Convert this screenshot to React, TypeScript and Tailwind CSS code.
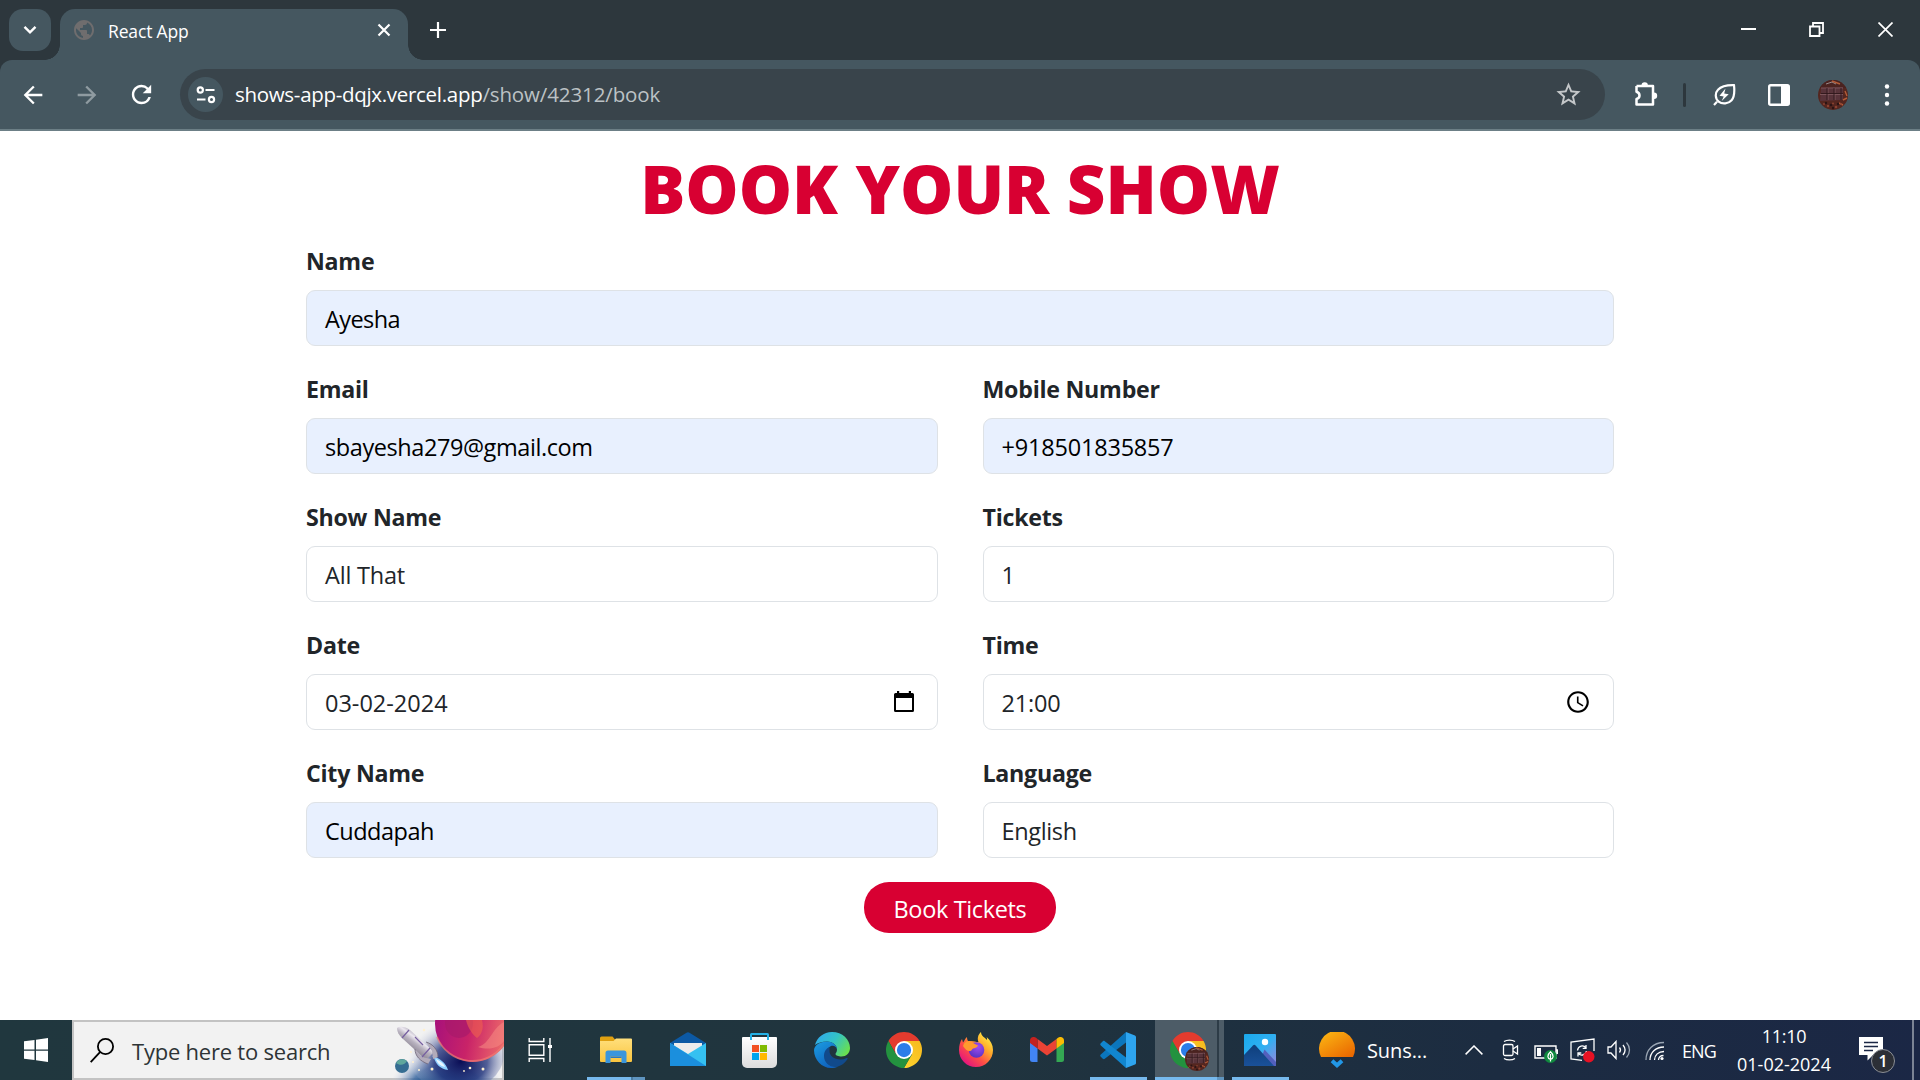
import type { ReactNode } from "react";
import { MdArrowBack, MdArrowForward, MdRefresh, MdStarBorder, MdPublic, MdAccessTime } from "react-icons/md";

/* ---------- browser chrome ---------- */

function Avatar({ className = "" }: { className?: string }) {
  return (
    <svg viewBox="0 0 30 30" className={className}>
      <defs>
        <clipPath id="avatarClip"><circle cx="15" cy="15" r="15" /></clipPath>
      </defs>
      <g clipPath="url(#avatarClip)">
        <rect width="30" height="30" fill="#54261f" />
        <path d="M0 0h30v8H0z" fill="#4a2320" />
        <path d="M3 8 25 7v13L2 21z" fill="#58333a" />
        <path d="M3 8h22M2 14.500h23M10 8v12M17 8v12" stroke="#80585e" strokeWidth="0.900" fill="none" />
        <path d="M3 13.500h22M9 8v12M16 8v12M23 8v12" stroke="#30171b" strokeWidth="0.900" fill="none" />
        <path d="M8 4l6-2 4 2" stroke="#9a8a8a" strokeWidth="1" fill="none" />
        <path d="M14 1l8 3M27 11l2 5M25 20l4-2M21 23l4 2" stroke="#b45c38" strokeWidth="1.400" fill="none" />
        <g fill="#8c4231">
          <circle cx="6" cy="24" r="1" /><circle cx="10" cy="26" r="1.200" /><circle cx="15" cy="23.500" r="1" /><circle cx="18" cy="27" r="1.300" /><circle cx="23" cy="24" r="1" />
        </g>
        <g fill="#2b1415">
          <circle cx="8" cy="23" r="1.200" /><circle cx="13" cy="25" r="1.300" /><circle cx="20" cy="24" r="1.200" /><circle cx="15" cy="28" r="1.200" />
        </g>
      </g>
    </svg>
  );
}

function TabStrip() {
  return (
    <div className="flex h-[60px] justify-between bg-[#2d373d]">
      <div className="flex">
        <div className="ml-[9px] mt-[9px] flex size-[42px] items-center justify-center rounded-[14px] bg-[#455760]">
          <svg viewBox="0 0 14 10" className="mt-[-1px] h-[10px] w-[14px]"><path d="M1.5 1.8 7 7.3l5.500-5.500" fill="none" stroke="#fff" strokeWidth="2.4" /></svg>
        </div>
        <div className="-ml-[6px] size-[15px] self-end bg-[radial-gradient(circle_at_0_0,transparent_14.5px,#455760_15px)]" />
        <div className="mt-[9px] flex h-[51px] w-[348px] items-start rounded-t-[15px] bg-[#455760] pl-3 pr-[17px] pt-[9px]">
          <MdPublic className="size-6 text-[#6f6d6e]" />
          <span className="ml-3 mt-px text-[17.5px] leading-6 tracking-[-0.15px] text-white">React App</span>
          <svg viewBox="0 0 14 14" className="ml-auto mt-[5px] size-[14px]"><path d="M1.500 1.500l11 11m0-11-11 11" stroke="#fff" strokeWidth="2.200" /></svg>
        </div>
        <div className="size-[15px] self-end bg-[radial-gradient(circle_at_100%_0,transparent_14.5px,#455760_15px)]" />
        <svg viewBox="0 0 16 16" className="ml-[7px] mt-[22px] size-4"><path d="M8 0v16M0 8h16" stroke="#fff" strokeWidth="2.200" /></svg>
      </div>
      <div className="flex pr-[27px] pt-[22px]">
        <svg viewBox="0 0 15 15" className="size-[15px]"><path d="M0 7h15" stroke="#fff" strokeWidth="2" /></svg>
        <svg viewBox="0 0 15 15" className="ml-[53px] size-[15px]" fill="none" stroke="#fff" strokeWidth="1.800"><path d="M1 4.500h9.500V14H1zM4 4V1h10v10h-3" /></svg>
        <svg viewBox="0 0 15 15" className="ml-[54px] size-[15px]"><path d="M0.500 0.500l14 14m0-14-14 14" stroke="#fff" strokeWidth="1.700" /></svg>
      </div>
    </div>
  );
}

function Toolbar() {
  return (
    <div className="bg-[#2d373d]">
      <div className="flex h-[71px] items-center rounded-t-[12px] border-b-2 border-[#6c7f86] bg-[#455760]">
        <MdArrowBack className="ml-[19px] size-[28px] text-white" />
        <MdArrowForward className="ml-[26px] size-[28px] text-[#8f9ba1]" />
        <MdRefresh className="ml-[26px] size-[29px] text-white" />
        <div className="ml-[24px] flex h-[51px] w-[1425px] items-center rounded-full bg-[#39444b] pl-2">
          <div className="flex size-[35px] items-center justify-center rounded-full bg-[#455760]">
            <svg viewBox="0 0 20 18" className="h-[18px] w-5" fill="none" stroke="#fff" strokeWidth="2.200">
              <circle cx="4.300" cy="4" r="2.600" /><path d="M9.500 4h9M1 13.500h8.500" /><circle cx="15.500" cy="13.500" r="2.600" />
            </svg>
          </div>
          <div className="-mt-[2px] ml-[12px] flex whitespace-nowrap text-[20.5px] leading-8 text-white">
            <span className="tracking-[-0.3px]">shows-app-dqjx.vercel.app</span>
            <span className="tracking-[-0.12px] text-[#bcc2c5]">/show/42312/book</span>
          </div>
          <MdStarBorder className="ml-auto mr-[22px] size-[29px] text-[#c4c7c9]" />
        </div>
        <svg viewBox="0 0 26 26" className="ml-[28px] size-[26px]">
          <path d="M3.500 4H20v7.500M20 16v6.500H3.500V17c1.900-.5 3-1.800 3-3.600s-1.100-3.200-3-3.700V4M20 11v5.500" fill="none" stroke="#fff" strokeWidth="2.500" strokeLinejoin="round" />
          <path d="M8.500 3.500a3.200 3.200 0 0 1 6.400 0zM21 10.500a3.200 3.200 0 0 1 0 6.400z" fill="#fff" />
        </svg>
        <div className="ml-[24px] h-6 w-[3px] rounded-sm bg-[#2d373d]" />
        <svg viewBox="0 0 24 24" className="ml-[26px] size-6">
          <path d="M2 22l3-3.200M22 2.200c.8 7.300 0 12.200-2.400 15-3.200 3.600-9.300 4.300-12.900 1.400C3 15.700 2.900 10 6 6.800 9 3.500 14.400 2 22 2.200z" fill="none" stroke="#fff" strokeWidth="2.200" />
          <path d="M13.500 5.500 7.500 12.800l4.200.6-2 4.500 7-6.700-4.500-.7z" fill="#fff" />
        </svg>
        <svg viewBox="0 0 22 22" className="ml-[32px] size-[22px]">
          <rect x="1.200" y="1.200" width="19.600" height="19.600" rx="1.500" fill="none" stroke="#fff" strokeWidth="2.400" /><path d="M13 1h8v20h-8z" fill="#fff" />
        </svg>
        <Avatar className="ml-[28px] size-[30px]" />
        <svg viewBox="0 0 6 22" className="ml-[36px] h-[22px] w-[6px]" fill="#fff"><circle cx="3" cy="2.500" r="2.200" /><circle cx="3" cy="11" r="2.200" /><circle cx="3" cy="19.500" r="2.200" /></svg>
      </div>
    </div>
  );
}

/* ---------- booking form ---------- */

type FieldProps = { label: string; value: string; filled?: boolean; icon?: ReactNode; wide?: boolean; tracking?: string };

function Field({ label, value, filled, icon, wide, tracking = "" }: FieldProps) {
  return (
    <label className={wide ? "col-span-2 flex flex-col" : "flex flex-col"}>
      <span className="h-9 whitespace-nowrap text-[23.2px] font-bold leading-9 tracking-[-0.25px] text-[#212529]">{label}</span>
      <span className={"mt-[11px] flex h-14 items-center justify-between rounded-[9px] border border-[#dee2e6] pl-[18px] pr-[22px] " + (filled ? "bg-[#e8f0fe] text-black" : "bg-white text-[#212529]")}>
        <span className={"mt-[2px] whitespace-nowrap text-[23.5px] leading-9 " + tracking}>{value}</span>
        {icon}
      </span>
    </label>
  );
}

function CalendarIcon() {
  return (
    <svg viewBox="0 0 20 22" className="mr-px h-[22px] w-5 text-black">
      <path d="M3 0h2.200v2h9.600V0H17v2h1.500A1.500 1.500 0 0 1 20 3.500v16a1.500 1.500 0 0 1-1.500 1.500h-17A1.500 1.500 0 0 1 0 19.500v-16A1.500 1.500 0 0 1 1.500 2H3zM2 7v12h16V7z" fill="currentColor" />
    </svg>
  );
}

function BookingPage() {
  return (
    <main className="h-[889px] bg-white pl-[306px] pr-[306px]">
      <h1 className="h-28 whitespace-nowrap pt-px text-center text-[67px] font-extrabold leading-[113px] text-[#d80032]">BOOK YOUR SHOW</h1>
      <form className="flex flex-col items-center">
        <div className="grid w-full grid-cols-2 gap-x-[45px] gap-y-[25px]">
          <Field wide label="Name" value="Ayesha" filled tracking="tracking-[-0.6px]" />
          <Field label="Email" value="sbayesha279@gmail.com" filled tracking="tracking-[-0.42px]" />
          <Field label="Mobile Number" value="+918501835857" filled tracking="tracking-[-0.2px]" />
          <Field label="Show Name" value="All That" tracking="tracking-[-0.2px]" />
          <Field label="Tickets" value="1" />
          <Field label="Date" value="03-02-2024" icon={<CalendarIcon />} />
          <Field label="Time" value="21:00" tracking="tracking-[-0.2px]" icon={<MdAccessTime className="size-[26px] text-black" />} />
          <Field label="City Name" value="Cuddapah" filled tracking="tracking-[-0.5px]" />
          <Field label="Language" value="English" tracking="tracking-[-0.35px]" />
        </div>
        <button type="button" className="mt-6 h-[51px] w-48 whitespace-nowrap rounded-[25px] bg-[#d80032] pt-[3px] text-[23.5px] leading-[48px] tracking-[-0.35px] text-white">Book Tickets</button>
      </form>
    </main>
  );
}

/* ---------- taskbar ---------- */

function ChromeLogo({ id }: { id: string }) {
  return (
    <svg viewBox="0 0 48 48" className="size-9">
      <defs>
        <linearGradient id={id + "y"} x1="1" y1="0" x2="0.300" y2="1"><stop offset="0" stopColor="#f7b91d" /><stop offset="1" stopColor="#fcd12c" /></linearGradient>
      </defs>
      <path d="M24 12h20.780A24 24 0 0 0 3.220 12L13.600 30z" fill="#e33b2e" />
      <path d="M34.390 30 24 48A24 24 0 0 0 44.780 12H24z" fill={"url(#" + id + "y)"} />
      <path d="M13.610 30 3.220 12A24 24 0 0 0 24 48l10.390-18z" fill="#23923f" />
      <circle cx="24" cy="24" r="12" fill="#fff" />
      <circle cx="24" cy="24" r="9.500" fill="#2b7de9" />
    </svg>
  );
}

function Slot({ children, bar, className = "" }: { children: ReactNode; bar?: ReactNode; className?: string }) {
  return (
    <div className={"flex h-[60px] shrink-0 flex-col items-center justify-between " + className}>
      <div className="flex h-[57px] items-center justify-center pt-[3px]">{children}</div>
      {bar}
    </div>
  );
}

function SpaceArt() {
  return (
    <svg viewBox="0 0 116 60" className="h-[60px] w-[116px] shrink-0">
      <defs>
        <radialGradient id="space" cx="0.520" cy="0.800" r="0.520">
          <stop offset="0" stopColor="#0b1a6e" /><stop offset="0.400" stopColor="#134a86" /><stop offset="0.650" stopColor="#3d6aa2" stopOpacity="0.850" /><stop offset="1" stopColor="#c9cfe4" stopOpacity="0" />
        </radialGradient>
        <radialGradient id="space2" cx="0.550" cy="0.600" r="0.550">
          <stop offset="0" stopColor="#0a0d55" /><stop offset="0.500" stopColor="#2a3a80" stopOpacity="0.800" /><stop offset="1" stopColor="#c9cfe4" stopOpacity="0" />
        </radialGradient>
        <linearGradient id="planet" x1="0" y1="0.300" x2="1" y2="0.500">
          <stop offset="0" stopColor="#a5107c" /><stop offset="0.500" stopColor="#c92368" /><stop offset="1" stopColor="#f0706a" />
        </linearGradient>
        <linearGradient id="rocket" x1="0.300" y1="0.750" x2="0.700" y2="0.250">
          <stop offset="0" stopColor="#77707f" /><stop offset="0.500" stopColor="#b9b3c0" /><stop offset="0.700" stopColor="#ece8f0" /><stop offset="1" stopColor="#9d97a8" />
        </linearGradient>
        <clipPath id="artClip"><path d="M0 0h116v60H0z" /></clipPath>
      </defs>
      <g clipPath="url(#artClip)">
        <ellipse cx="56" cy="48" rx="56" ry="44" fill="url(#space)" />
        <ellipse cx="68" cy="34" rx="48" ry="38" fill="url(#space2)" />
        <circle cx="85" cy="4" r="38" fill="url(#planet)" />
        <ellipse cx="71" cy="3" rx="14" ry="15" fill="#a8196b" opacity="0.700" />
        <path d="M78 0h16c2 8 0 14-5 18C84 14 80 8 78 0z" fill="#f0624f" opacity="0.600" />
        <path d="M116 2c-12 6-14 22-26 25 12 4 22 0 26-6z" fill="#f58a84" opacity="0.550" />
        <path d="M49 17a38 38 0 0 0 67 7" fill="none" stroke="#f07b72" strokeWidth="1.800" opacity="0.700" />
        <circle cx="14" cy="46" r="7" fill="#356d92" />
        <path d="M8 43a7 7 0 0 1 11-2c-2 4-7 5-11 2z" fill="#5fa79c" />
        <path d="M44 36c8 2 14 7 16 14-8-1-12-6-14-12z" fill="#8fd0ff" />
        <path d="M48 39c5 2 8 5 9 8-5-1-8-4-9-8z" fill="#e8f6ff" />
        <path d="M9 8c2-2 8-2 13 2l24 22-8 8L14 18c-3-3-5-6-5-10z" fill="url(#rocket)" />
        <path d="M27 29c0 7 5 12 13 15l3-5-9-2zM38 22c7 2 12 8 12 15l-5 2-1-8z" fill="#b2abba" />
        <path d="M27 29c0 7 5 12 13 15M38 22c7 2 12 8 12 15" fill="none" stroke="#6e6678" strokeWidth="0.800" />
        <path d="M21 10l-7 8M42 28l-8 9M27 17l8 8" stroke="#765fa0" strokeWidth="1.200" fill="none" />
        <g fill="#fff0cf">
          <circle cx="36" cy="10" r="1.300" /><circle cx="44" cy="49" r="1.500" /><circle cx="31" cy="50" r="1" /><circle cx="25" cy="42" r="1" /><circle cx="23" cy="32" r="0.900" /><circle cx="82" cy="48" r="1.300" /><circle cx="95" cy="49" r="1.500" /><circle cx="76" cy="51" r="0.900" />
        </g>
      </g>
    </svg>
  );
}

function Taskbar() {
  return (
    <footer className="flex h-[60px] items-center bg-[linear-gradient(90deg,#20373e_0%,#20343e_50%,#1c2c41_78%,#1b2745_100%)]">
      <Slot className="w-[72px]">
        <svg viewBox="0 0 24 24" className="ml-[-1px] size-6" fill="#fff"><path d="M0 3.300 10.500 2v9.500H0zM12 1.800 24 0v11.500H12zM0 12.800h10.500V22L0 20.700zM12 12.800h12V24l-12-1.800z" /></svg>
      </Slot>
      <div className="flex h-[60px] w-[432px] items-center border-2 border-[#c3c3c3] bg-[#f2f2f2] pl-4">
        <svg viewBox="0 0 24 25" className="h-[25px] w-6 shrink-0" fill="none" stroke="#000" strokeWidth="1.800"><circle cx="15.500" cy="8.500" r="7.600" /><path d="M10 14.200.7 24.200" /></svg>
        <span className="ml-[18px] mt-[2px] whitespace-nowrap text-[22px] leading-8 tracking-[-0.22px] text-[#2e3436]">Type here to search</span>
        <div className="-mr-[2px] -mt-px ml-auto"><SpaceArt /></div>
      </div>
      <Slot className="w-[76px]">
        <svg viewBox="0 0 25 24" className="ml-[-3px] h-6 w-[25px]" fill="none" stroke="#fff" strokeWidth="1.400"><path d="M1.200 0v3.500h14.600V0M1.200 6.800h14.600v10.500H1.200zM1.200 24v-3.500h14.600V24M22 0v24" /><path d="M20 7h4v3h-4z" fill="#fff" stroke="none" /></svg>
      </Slot>
      <Slot className="w-[72px]" bar={<div className="flex h-[3px] w-[58px]"><div className="w-11 bg-[#76b9ed]" /><div className="w-[2px] bg-[#4a7ca3]" /><div className="w-3 bg-[#5f95c0]" /></div>}>
        <svg viewBox="0 0 32 28" className="h-7 w-8">
          <defs><linearGradient id="folder" x1="0" y1="0" x2="0" y2="1"><stop offset="0" stopColor="#ffdf7c" /><stop offset="1" stopColor="#fac53f" /></linearGradient></defs>
          <path d="M1.500.5h11l3 3.500H31a1 1 0 0 1 1 1V10H0V2A1.500 1.500 0 0 1 1.500.5z" fill="#dfa011" />
          <path d="M0 5h13.500L16 2.500h15a1 1 0 0 1 1 1V25a1 1 0 0 1-1 1H1a1 1 0 0 1-1-1z" fill="url(#folder)" />
          <path d="M5.500 27V17a2.500 2.500 0 0 1 2.500-2.500h16a2.500 2.500 0 0 1 2.500 2.500v10h-5v-6.500h-11V27z" fill="#3a96dd" />
          <path d="M10.500 20.500h11v1.500h-11z" fill="#2b78c0" />
        </svg>
      </Slot>
      <Slot className="w-[72px]">
        <svg viewBox="0 0 36 34" className="-mt-[2px] h-[34px] w-9">
          <path d="M0 11 16.500.8a3 3 0 0 1 3 0L36 11v5H0z" fill="#0c59a4" />
          <path d="M4 11h28v12H4z" fill="#ececec" />
          <path d="M0 11 18 22 36 11v23H0z" fill="#35c1f1" />
          <path d="M0 11l36 23H0z" fill="#1b8fdd" />
        </svg>
      </Slot>
      <Slot className="w-[72px]">
        <svg viewBox="0 0 35 36" className="-ml-px h-9 w-[35px]">
          <defs><linearGradient id="bag" x1="0" y1="0" x2="0" y2="1"><stop offset="0" stopColor="#fff" /><stop offset="1" stopColor="#dcdcdc" /></linearGradient></defs>
          <path d="M0 6a1 1 0 0 1 1-1h33a1 1 0 0 1 1 1v25a5 5 0 0 1-5 5H5a5 5 0 0 1-5-5z" fill="url(#bag)" />
          <path d="M9 8V2.500A.5.5 0 0 1 9.500 2h16a.5.5 0 0 1 .5.5V8" fill="none" stroke="#25b1e6" strokeWidth="2" />
          <path d="M10 13h7v7h-7z" fill="#f25022" /><path d="M18 13h7v7h-7z" fill="#7fba00" /><path d="M10 21h7v7h-7z" fill="#00a4ef" /><path d="M18 21h7v7h-7z" fill="#ffb900" />
        </svg>
      </Slot>
      <Slot className="w-[72px]">
        <svg viewBox="0 0 36 36" className="size-9">
          <defs>
            <linearGradient id="edgeTop" x1="0" y1="0.200" x2="1" y2="0.700"><stop offset="0" stopColor="#2fa9ee" /><stop offset="0.500" stopColor="#33c3c5" /><stop offset="1" stopColor="#6be04c" /></linearGradient>
            <linearGradient id="edgeMid" x1="0" y1="0" x2="0.600" y2="1"><stop offset="0" stopColor="#1b9de2" /><stop offset="1" stopColor="#0f62bd" /></linearGradient>
          </defs>
          <path d="M1 13C3 5.500 9.500 0 18 0c10.500 0 18 7.500 18 16 0 5-4 8.500-8.500 8.500-3 0-6-1-6-2.500 0-1 1.500-1.700 1.500-4.500 0-4-4-8-10-8C8 9.500 4 11 1 13z" fill="url(#edgeTop)" />
          <path d="M13 9.500C5.500 9.500.5 13.500 0 18c0 10 8 18 17 18 2.500 0 5-.5 7-1.500-8 .5-13.500-6-12-14 .7-3.500 3-5.500 5-6.500 2.500-1 5.500.5 6 3.500 0-4-4-8-10-8z" fill="url(#edgeMid)" />
          <path d="M15.500 15c-3.500 1.500-5.500 5-5.500 9 0 6 4.500 11 12 11 5.500-1 9.500-4.500 11.500-8 .4-.8-.3-1.300-1-1-2 1-4 1.500-6 1.500-6.500 0-11-4-11-8.500 0-1.500 0-3 0-4z" fill="#114a8b" />
        </svg>
      </Slot>
      <Slot className="w-[72px]"><ChromeLogo id="chromeA" /></Slot>
      <Slot className="w-[72px]">
        <svg viewBox="0 0 36 36" className="size-9">
          <defs>
            <linearGradient id="fox" x1="0.900" y1="0.100" x2="0.200" y2="0.900"><stop offset="0" stopColor="#fff044" /><stop offset="0.350" stopColor="#ffa62b" /><stop offset="0.650" stopColor="#ff4f45" /><stop offset="1" stopColor="#e5177c" /></linearGradient>
            <radialGradient id="foxGlobe" cx="0.600" cy="0.300" r="0.700"><stop offset="0" stopColor="#a24cf0" /><stop offset="1" stopColor="#5a33c4" /></radialGradient>
          </defs>
          <path d="M23 0c0 4 3.500 5 6 8 .2-1 0-2-.4-3 4 3.500 6.400 8 6.400 13 0 9.500-7.500 17-17 17S1 27.500 1 18c0-4.500 1-8 3-11l1 3.500C6.500 9 7 6.500 9 5c0 2 .5 3.500 1.500 4.500 3-1.500 7 .5 10 .5C19 6.500 20 2.500 23 0z" fill="url(#fox)" />
          <circle cx="18.500" cy="18" r="7.800" fill="url(#foxGlobe)" />
          <path d="M5 14c1-4 4-5.500 7-5 3 1.500 5 3.500 8 4.500-1 2.500-3.500 2.500-5 3-1.500 1-1 2.500-3.500 2.500S7 17 5 14z" fill="#ff9a2e" />
        </svg>
      </Slot>
      <Slot className="w-[70px]">
        <svg viewBox="0 0 34 26" className="-mt-px h-[26px] w-[34px]">
          <path d="M0 5l7.500 6v14H2.500A2.500 2.500 0 0 1 0 22.500z" fill="#4285f4" />
          <path d="M34 5l-7.500 6v14h5a2.500 2.500 0 0 0 2.500-2.500z" fill="#34a853" />
          <path d="M7.500 2 17 9l9.500-7v9.500L17 18.500l-9.500-7z" fill="#ea4335" />
          <path d="M0 3.500C0 .3 3.700-1 6 .8L7.500 2v9.500L0 6z" fill="#c5221f" />
          <path d="M34 3.500C34 .3 30.300-1 28 .8L26.500 2v9.500L34 6z" fill="#fbbc04" />
        </svg>
      </Slot>
      <Slot className="w-[73px]" bar={<div className="h-[3px] w-[57px] bg-[#76b9ed]" />}>
        <svg viewBox="0 0 36 36" className="-ml-px mr-px size-9">
          <path d="M26 0 0.800 22.600a1.500 1.500 0 0 0 0 2.200l2 1.900c.6.500 1.300.6 2 .1L26 10.500z" fill="#0b76bd" />
          <path d="M26 36 .8 13.400a1.500 1.500 0 0 1 0-2.200l2-1.900c.6-.5 1.300-.6 2-.1L26 25.500z" fill="#1186cf" />
          <path d="M26 0l9 3.500c.6.300 1 .9 1 1.600v25.800c0 .7-.4 1.300-1 1.600L26 36z" fill="#2ea5ef" />
        </svg>
      </Slot>
      <div className="flex h-[60px] w-[69px]">
        <Slot className="w-[62px] bg-[#4d5c67]" bar={<div className="h-[3px] w-full bg-[#76b9ed]" />}>
          <div className="relative ml-[3px] size-9">
            <ChromeLogo id="chromeB" />
            <Avatar className="absolute left-[15px] top-[15px] size-6" />
          </div>
        </Slot>
        <div className="h-full w-[2px] border-b-[3px] border-[#5f95c0] bg-[#2d3c47]" />
        <div className="h-full w-[5px] border-b-[3px] border-[#5f95c0] bg-[#4d5c67]" />
      </div>
      <Slot className="w-[73px]" bar={<div className="h-[3px] w-[57px] bg-[#76b9ed]" />}>
        <svg viewBox="0 0 32 32" className="-ml-px mr-px size-8">
          <defs>
            <linearGradient id="sky" x1="0" y1="0" x2="1" y2="1"><stop offset="0" stopColor="#1aa9ec" /><stop offset="0.500" stopColor="#2fb0f2" /><stop offset="1" stopColor="#9a86dd" /></linearGradient>
            <linearGradient id="hill" x1="0" y1="0" x2="0" y2="1"><stop offset="0" stopColor="#0e3f7c" /><stop offset="1" stopColor="#1a5199" /></linearGradient>
          </defs>
          <rect width="32" height="32" rx="1" fill="url(#sky)" />
          <circle cx="21" cy="8" r="3.200" fill="#fff" />
          <path d="M14 32 20.500 15.500 32 28v4z" fill="#5360bd" />
          <path d="M0 21 9 11.500a1.800 1.800 0 0 1 2.600 0L30 32H0z" fill="url(#hill)" />
        </svg>
      </Slot>
      <svg viewBox="0 0 36 36" className="ml-[22px] size-9 shrink-0">
        <defs><linearGradient id="sun" x1="0.100" y1="0" x2="0.900" y2="1"><stop offset="0" stopColor="#fcb814" /><stop offset="1" stopColor="#e96600" /></linearGradient></defs>
        <path d="M2 25A18 18 0 1 1 34 25z" fill="url(#sun)" />
        <path d="M13 28.800 18 33.300l5-4.500" fill="none" stroke="#2297e6" strokeWidth="4" />
      </svg>
      <span className="ml-[12px] mt-[2px] w-[62px] whitespace-nowrap text-[20px] leading-7 tracking-[-0.1px] text-white">Suns...</span>

      <svg viewBox="0 0 18 10" className="ml-[36px] h-[10px] w-[18px] shrink-0"><path d="M.6 9.400 9 1l8.400 8.400" fill="none" stroke="#fff" strokeWidth="1.500" /></svg>
      <svg viewBox="0 0 18 22" className="ml-[19px] h-[22px] w-[18px] shrink-0" fill="none" stroke="#fff" strokeWidth="1.300"><rect x="1.500" y="5.500" width="9.500" height="11" rx="1.500" /><path d="M11 10l4.500-3v8L11 12M2 2.500C5 .6 10 .6 13 2.500M2 19.500c3 1.900 8 1.900 11 0" /></svg>
      <svg viewBox="0 0 24 18" className="ml-[14px] mt-[7px] h-[18px] w-6 shrink-0"><path d="M1 1h21v12H1zM22 5h1.500v4" fill="none" stroke="#fff" strokeWidth="1.400" /><path d="M3 3h4v8H3z" fill="#fff" /><circle cx="16.500" cy="11.500" r="6.500" fill="#10893e" /><path d="M16.500 6.800c4 3.500 3 7 0 7.500-3-.5-4-4 0-7.500zM16.500 9v7.500" fill="none" stroke="#fff" strokeWidth="1.200" /></svg>
      <svg viewBox="0 0 25 25" className="ml-[12px] mt-px h-[25px] w-[25px] shrink-0" fill="none" stroke="#fff" strokeWidth="1.300"><path d="M24 13V1L1 4v17l11 1.300" /><path d="M7.500 12.500c.5-5 6-6 8.500-2.500M16 7v3.300h-3.300M16.500 13c-.7 4.500-6.500 5.500-8.500 2M8 18.500V15h3.300" /><circle cx="18.800" cy="18.800" r="5.700" fill="#e81123" stroke="none" /></svg>
      <svg viewBox="0 0 24 20" className="ml-[12px] h-5 w-6 shrink-0" fill="none" stroke="#fff" strokeWidth="1.300"><path d="M1 7h3l5-5.500v17L4 13H1z" /><path d="M12.500 7.500c1.200 1.500 1.200 3.500 0 5M16 5c2.500 3 2.500 7 0 10" /><path d="M19.500 2.500c4 4.500 4 10.500 0 15" stroke="#9aa5b3" /></svg>
      <svg viewBox="0 0 20 20" className="ml-[14px] mt-[2px] size-5 shrink-0" fill="none" stroke="#fff" strokeWidth="1.300"><path d="M1 19C1 9 8 1.500 19 1.500" stroke="#9aa5b3" /><path d="M5 19C5 11.500 10.500 6 19 6M9.500 19c0-5 4-8.500 9.500-8.500M13.500 19c0-2.500 2-4.500 5-4.500" /><circle cx="17" cy="17.500" r="1.600" fill="#fff" stroke="none" /></svg>
      <span className="ml-[17px] mt-px w-[36px] whitespace-nowrap text-[18px] leading-6 tracking-[-0.9px] text-white">ENG</span>
      <div className="ml-[18px] -mt-px flex w-[96px] flex-col items-center whitespace-nowrap text-[18px] leading-7 text-white">
        <span className="tracking-[-0.3px]">11:10</span>
        <span>01-02-2024</span>
      </div>
      <div className="relative ml-[27px] -mt-[2px] h-6 w-6">
        <svg viewBox="0 0 24 24" className="size-6"><path d="M0 0h24v18H14l-5.500 5.500V18H0z" fill="#fff" /><path d="M5 5.500h14M5 9.500h14M5 13.500h9" stroke="#1b2745" strokeWidth="1.300" /></svg>
        <div className="absolute left-3 top-3 flex size-6 items-center justify-center rounded-full border border-[#8b8f96] bg-[#2c2f36] text-[16px] font-semibold leading-none text-white">1</div>
      </div>
      <div className="ml-auto mr-[6px] h-[60px] w-[2px] bg-[#7b8494]" />
    </footer>
  );
}

export default function App() {
  return (
    <div className="flex h-[1080px] w-[1920px] flex-col overflow-hidden bg-white font-['Open_Sans','Noto_Sans',sans-serif]">
      <TabStrip />
      <Toolbar />
      <BookingPage />
      <Taskbar />
    </div>
  );
}
